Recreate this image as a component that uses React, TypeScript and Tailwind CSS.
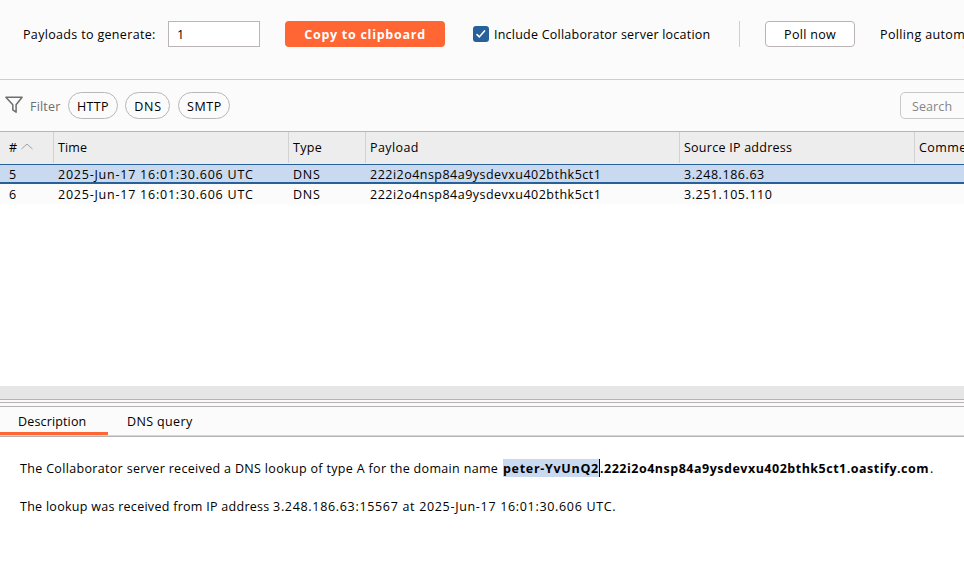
const columns = [
  { label: "#", width: "w-[53px] pl-[9px]", tracking: "" },
  { label: "Time", width: "w-[235px] border-l pl-[4px]", tracking: "tracking-[0.1px]" },
  { label: "Type", width: "w-[77px] border-l pl-[4px]", tracking: "tracking-[0.3px]" },
  { label: "Payload", width: "w-[314px] border-l pl-[4px]", tracking: "tracking-[0.4px]" },
  { label: "Source IP address", width: "w-[235px] border-l pl-[4px]", tracking: "tracking-[0.25px]" },
  { label: "Comment", width: "w-[100px] border-l pl-[4px]", tracking: "tracking-[0.4px]" },
];

const rows = [
  { id: "5", ip: "3.248.186.63", selected: true },
  { id: "6", ip: "3.251.105.110", selected: false },
];

const chips = [
  { label: "HTTP", style: "w-[50px] tracking-[0.4px] mr-[7px]" },
  { label: "DNS", style: "w-[45px] pl-px tracking-[0.8px] mr-[8px]" },
  { label: "SMTP", style: "w-[52px] pl-px tracking-[0.6px]" },
];

function TopBar() {
  return (
    <div className="flex h-20 items-start border-b border-[#cdcdcd] pt-[21px] leading-[27px]">
      <span className="w-[145px] shrink-0 pl-[23px] tracking-[0.33px]">Payloads to generate:</span>
      <div className="ml-[23px] h-[26px] w-[92px] shrink-0 border border-[#bab6b6] bg-white pl-[8px] leading-[25px]">1</div>
      <button className="ml-[25px] h-[26px] w-[160px] shrink-0 rounded-[4px] bg-[#ff6633] text-center leading-[27px] font-bold tracking-[0.73px] text-white">
        Copy to clipboard
      </button>
      <svg className="mt-[5px] ml-[28px] shrink-0" width="16" height="16" viewBox="0 0 16 16">
        <rect width="16" height="16" rx="3" fill="#26619c" />
        <path d="M4 8.6l2.3 2.3 5.2-6" fill="none" stroke="#fff" strokeWidth="1.6" strokeLinecap="round" />
      </svg>
      <span className="ml-[5px] w-[245px] shrink-0 tracking-[0.23px]">Include Collaborator server location</span>
      <div className="h-[26px] w-px shrink-0 bg-[#cfcfcf]" />
      <button className="ml-[25px] h-[26px] w-[90px] shrink-0 rounded-[4px] border border-[#bab3b3] bg-white text-center leading-[25px] tracking-[0.3px]">
        Poll now
      </button>
      <span className="ml-[25px] shrink-0 tracking-[0.37px]">Polling automatically</span>
    </div>
  );
}

function FilterBar() {
  return (
    <div className="flex h-[51px] items-start pt-3 leading-[27px]">
      <svg className="mt-[4px] ml-[5px] shrink-0" width="18" height="18" viewBox="0 0 18 18" fill="none" stroke="#6e6e6e" strokeWidth="1.5">
        <path d="M.9 1.2h16.2l-6 7.6v7.4l-3.3-2.3V8.8z" strokeLinejoin="round" />
      </svg>
      <span className="ml-[7px] w-[38px] shrink-0 leading-[29px] tracking-[0.2px] text-[#6e6e6e]">Filter</span>
      {chips.map((c) => (
        <button key={c.label} className={`h-[27px] shrink-0 rounded-full border border-[#bab6b6] text-center leading-[27px] ${c.style}`}>
          {c.label}
        </button>
      ))}
      <div className="ml-[670px] h-[27px] w-[100px] shrink-0 rounded-[5px] border border-[#c8c8c8] pl-[11px] tracking-[0.1px] text-[#858585]">
        Search
      </div>
    </div>
  );
}

function Table() {
  return (
    <div className="h-[255px] border-t border-[#b8b5b5] bg-white">
      <div className="flex h-[32px] items-start bg-[#ededed] leading-[31px]">
        {columns.map((c) => (
          <div key={c.label} className={`flex h-[31px] shrink-0 border-[#d2d2d2] ${c.width} ${c.tracking}`}>
            {c.label}
            {c.label === "#" && (
              <svg className="mt-[11px] ml-[4px]" width="12" height="7" viewBox="0 0 12 7" fill="none" stroke="#a0a0a0">
                <path d="M.5 6L6 1l5.5 5" />
              </svg>
            )}
          </div>
        ))}
      </div>
      {rows.map((r) => (
        <div
          key={r.id}
          className={`flex h-[20px] ${r.selected ? "border-t border-b-2 border-t-[#26619c] border-b-[#26619c] bg-[#c9d9f0] leading-[19px]" : "bg-[#fbfbfb] leading-[21px]"}`}
        >
          <span className="w-[58px] shrink-0 pl-[9px]">{r.id}</span>
          <span className="w-[235px] shrink-0 tracking-[0.77px]">2025-Jun-17 16:01:30.606 UTC</span>
          <span className="w-[77px] shrink-0 tracking-[0.7px]">DNS</span>
          <span className="w-[314px] shrink-0 tracking-[0.48px]">222i2o4nsp84a9ysdevxu402bthk5ct1</span>
          <span className="shrink-0 tracking-[0.55px]">{r.ip}</span>
        </div>
      ))}
    </div>
  );
}

function Details() {
  return (
    <>
      <div className="h-[13px] bg-[#e6e6e6]" />
      <div className="h-[4px] border-y border-[#b6b3b3] bg-[#fbf9fa]" />
      <div className="h-[3px] bg-[#fbf9fa]" />
      <div className="flex h-[31px] items-start border-t border-b border-t-[#b6b3b3] border-b-[#b6b3b3] leading-[30px] shadow-[inset_0_-1px_0_#d6d6d6]">
        <div className="h-[28px] w-[108px] border-b-[3px] border-[#ff6633] pl-[18px] tracking-[0.15px]">Description</div>
        <div className="pl-[19px] tracking-[0.36px]">DNS query</div>
      </div>
      <div className="h-[124px] bg-white pt-[22px] pl-[20px] leading-[19px]">
        <p className="flex h-[19px] whitespace-pre">
          <span className="w-[483px] shrink-0 tracking-[0.33px]">
            The Collaborator server received a DNS lookup of type A for the domain name
          </span>
          <b className="h-[18px] w-[97px] shrink-0 border-r border-black bg-[#c9d9f0] tracking-[0.7px]">peter-YvUnQ2</b>
          <b className="w-[330px] shrink-0 tracking-[0.5px]">.222i2o4nsp84a9ysdevxu402bthk5ct1.oastify.com</b>
          <span>.</span>
        </p>
        <p className="mt-[19px] tracking-[0.28px]">
          The lookup was received from IP address{" "}
          <span className="tracking-[0.68px]">3.248.186.63:15567 at 2025-Jun-17 16:01:30.606 UTC.</span>
        </p>
      </div>
    </>
  );
}

export default function App() {
  return (
    <div className="h-[561px] w-[964px] overflow-hidden bg-[#fbfbfb] font-['Open_Sans','Noto_Sans',sans-serif] text-[12.5px] whitespace-nowrap text-black">
      <TopBar />
      <FilterBar />
      <Table />
      <Details />
    </div>
  );
}
